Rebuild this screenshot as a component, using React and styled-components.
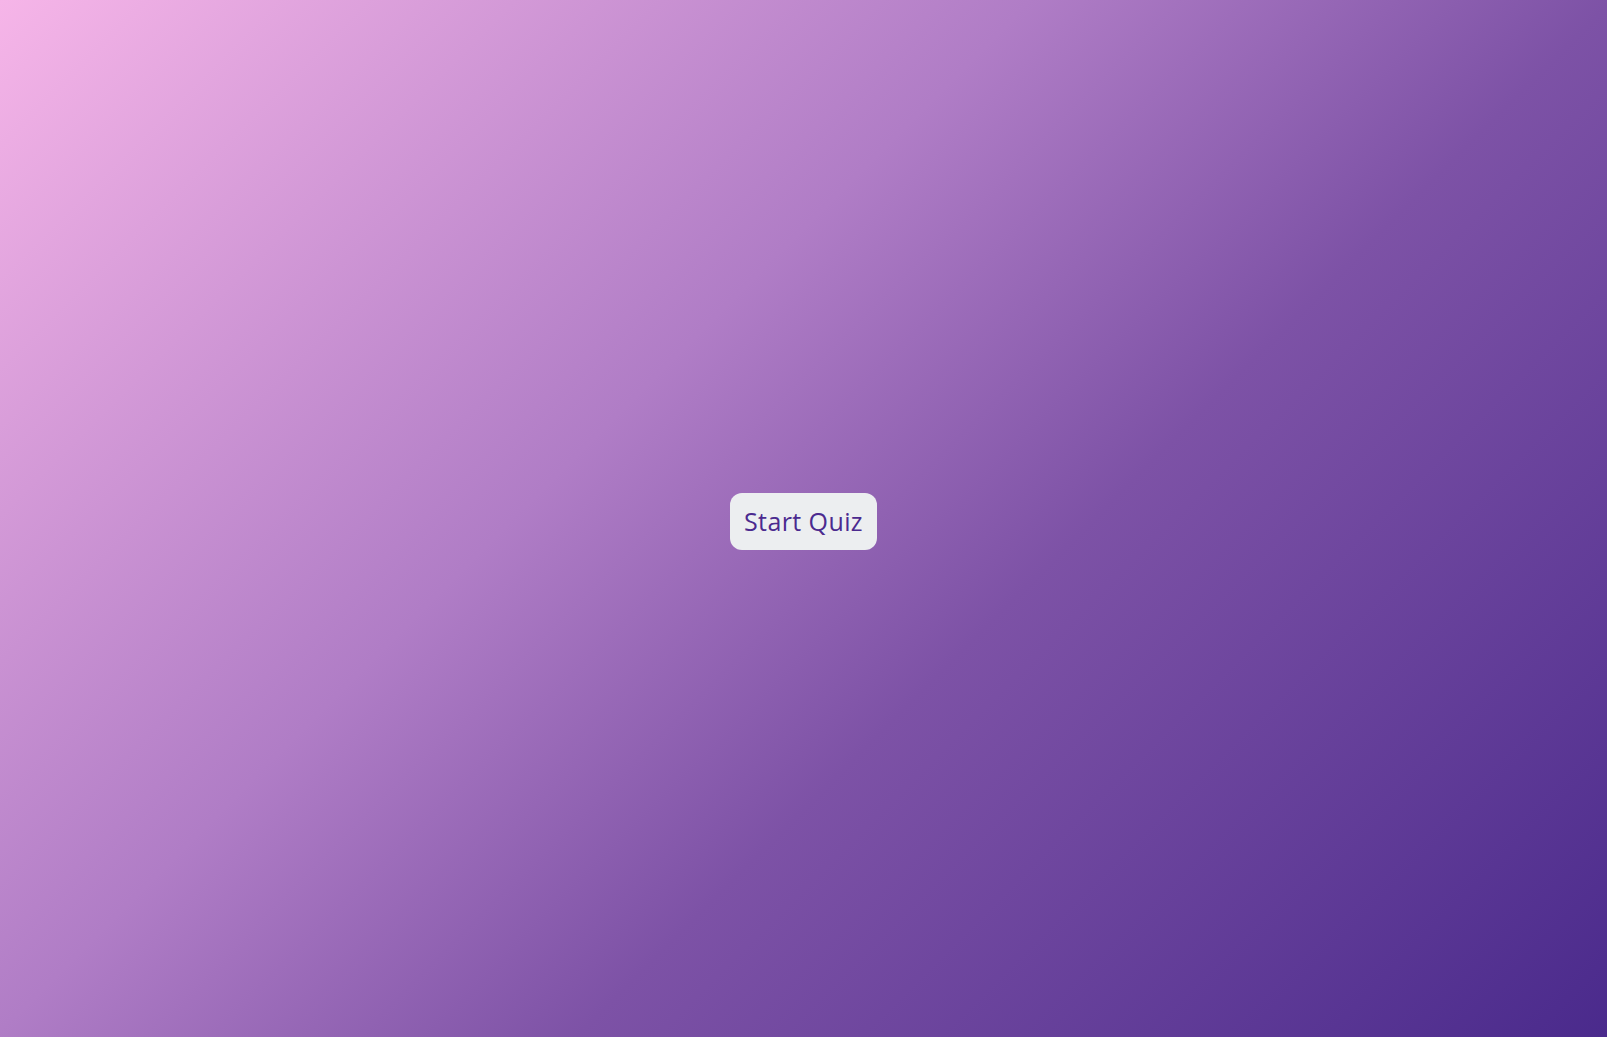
import React from "react";
import styled, { createGlobalStyle } from "styled-components";

const GlobalStyle = createGlobalStyle`
  html, body {
    margin: 0;
    padding: 0;
    height: 100%;
  }
  #root {
    height: 100%;
  }
`;

const Page = styled.div`
  display: flex;
  align-items: center;
  justify-content: center;
  width: 100%;
  min-height: 100vh;
  padding-top: 6px;
  box-sizing: border-box;
  background: linear-gradient(
    135deg,
    #f6b5e8 0%,
    #b07dc6 39%,
    #7d52a6 61%,
    #4a2a8c 100%
  );
`;

const StartButton = styled.button`
  padding: 12px 14px;
  border: 0;
  border-radius: 12px;
  background-color: #eceef0;
  color: #4b2a8f;
  font-family: "Open Sans", "Liberation Sans", sans-serif;
  font-size: 25px;
  line-height: 33px;
  letter-spacing: 0.4px;
  cursor: pointer;
`;

const App = () => (
  <>
    <GlobalStyle />
    <Page>
      <StartButton>Start Quiz</StartButton>
    </Page>
  </>
);

export default App;
